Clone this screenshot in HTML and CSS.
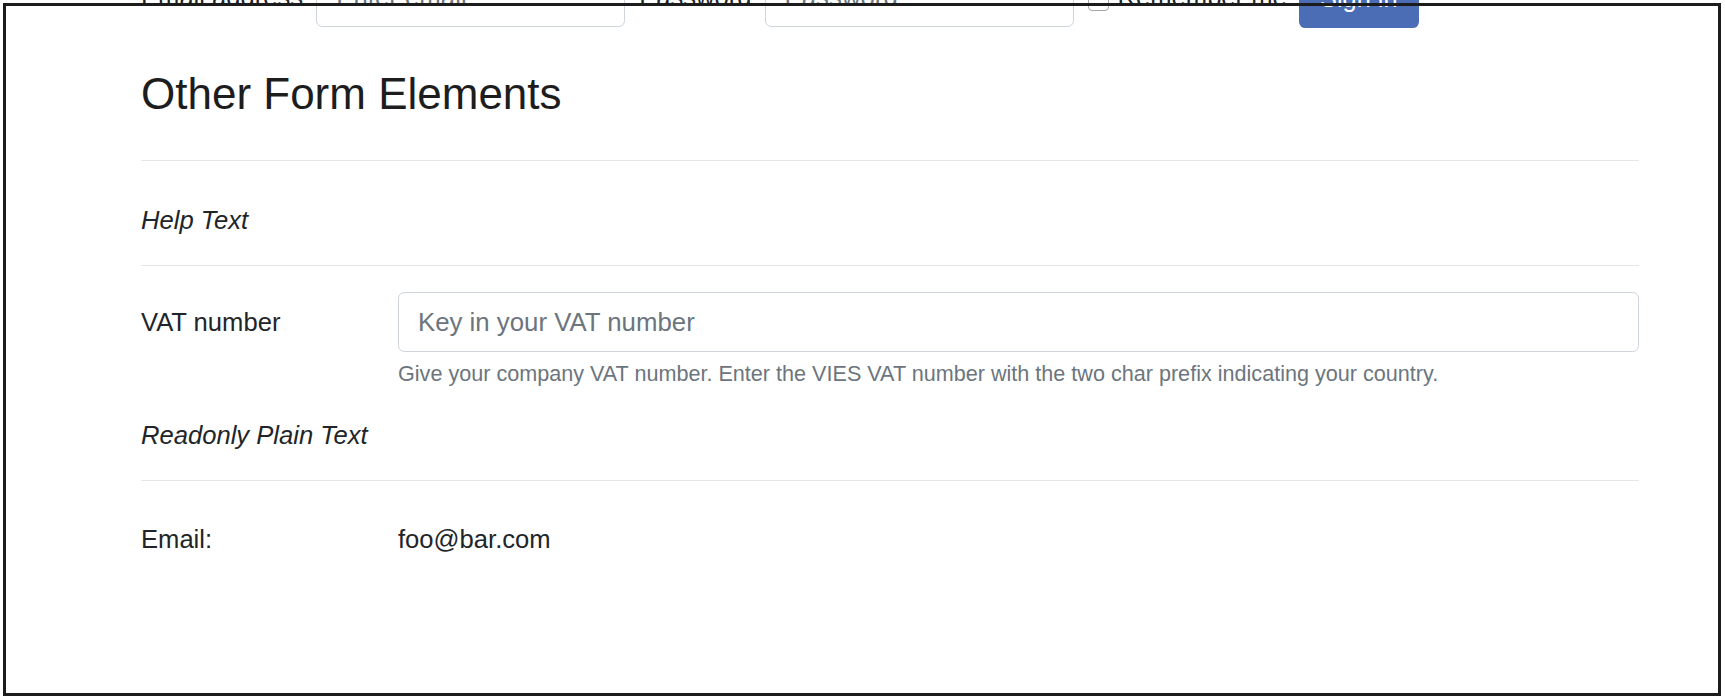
FILE: index.html
```html
<!DOCTYPE html>
<html lang="en">
<head>
<meta charset="utf-8">
<title>Other Form Elements</title>
<link rel="stylesheet" href="styles.css">
</head>
<body>
<div class="page">
  <div class="content">
    <form class="login">
      <label class="login-label">Email address</label>
      <input class="field field-email" type="email" placeholder="Enter email">
      <label class="login-label login-label-pw">Password</label>
      <input class="field field-pw" type="password" placeholder="Password">
      <span class="check"></span>
      <span class="check-text">Remember me</span>
      <button class="btn" type="button">Sign in</button>
    </form>

    <h3 class="title">Other Form Elements</h3>
    <hr class="rule rule-1">

    <p class="legend legend-help">Help Text</p>
    <hr class="rule rule-2">

    <div class="row row-vat">
      <label class="row-label">VAT number</label>
      <div class="row-body">
        <input class="field field-vat" type="text" placeholder="Key in your VAT number">
        <small class="help">Give your company VAT number. Enter the VIES VAT number with the two char prefix indicating your country.</small>
      </div>
    </div>

    <p class="legend legend-readonly">Readonly Plain Text</p>
    <hr class="rule rule-3">

    <div class="row row-email">
      <label class="row-label">Email:</label>
      <div class="row-body plain">foo@bar.com</div>
    </div>
  </div>
</div>
</body>
</html>
```

FILE: styles.css
```css
html, body {
  margin: 0;
  padding: 0;
  background: #ffffff;
}

body {
  font-family: "Liberation Sans", Arial, Helvetica, sans-serif;
  color: #212529;
  font-size: 25.6px;
  line-height: 1.5;
}

.page {
  position: relative;
  width: 1725px;
  height: 699px;
  overflow: hidden;
}

.page::after {
  content: "";
  position: absolute;
  left: 3px;
  top: 3px;
  right: 4px;
  bottom: 3px;
  border: 3px solid #1c1c1c;
  pointer-events: none;
}

.content {
  width: 1498px;
  margin-left: 141px;
}

/* top inline form (cut off by the frame) */
.login {
  display: flex;
  align-items: center;
  height: 60px;
  margin: -33px 0 0 0;
}

.login-label {
  margin-right: 13px;
  line-height: 38px;
}

.login-label-pw {
  margin-left: 14px;
}

.field {
  box-sizing: border-box;
  height: 60px;
  border: 1.6px solid #ced4da;
  border-radius: 6.3px;
  background: #fff;
  font-family: inherit;
  font-size: 25.8px;
  color: #495057;
  padding: 0 19px;
  outline: none;
}

.field::placeholder {
  color: #6c757d;
}

.field-email {
  width: 309px;
}

.field-pw {
  width: 309px;
}

.check {
  box-sizing: border-box;
  width: 21px;
  height: 21px;
  border: 1.6px solid #a7a7a7;
  border-radius: 4px;
  margin: 0 9px 0 14px;
  position: relative;
  top: 3px;
}

.check-text {
  line-height: 38px;
  margin-right: 12px;
}

.btn {
  box-sizing: border-box;
  width: 120px;
  height: 60px;
  margin-top: 2px;
  border: none;
  border-radius: 6.3px;
  background: #4a6db5;
  color: #fff;
  font-family: inherit;
  font-size: 25.3px;
}

/* heading */
.title {
  margin: 40px 0 0 0;
  font-size: 44px;
  font-weight: 500;
  line-height: 53px;
  color: #1d1d1d;
}

.rule {
  border: 0;
  height: 1px;
  background: #e6e6e6;
  margin: 0;
}

.rule-1 {
  margin-top: 40px;
}

.legend {
  margin: 0;
  font-style: italic;
  line-height: 38px;
}

.legend-help {
  margin-top: 40px;
}

.rule-2 {
  margin-top: 26px;
}

.row {
  display: grid;
  grid-template-columns: 210px 1fr;
  column-gap: 47px;
}

.row-vat {
  margin-top: 26px;
}

.row-vat .row-label {
  line-height: 60px;
  height: 60px;
}

.row-body {
  display: flex;
  flex-direction: column;
}

.field-vat {
  width: 100%;
}

.help {
  margin-top: 7px;
  font-size: 21.6px;
  line-height: 30.4px;
  color: #6c757d;
}

.legend-readonly {
  margin-top: 27px;
}

.rule-3 {
  margin-top: 26px;
}

.row-email {
  margin-top: 39px;
  line-height: 38px;
}

.plain {
  display: block;
}
```
